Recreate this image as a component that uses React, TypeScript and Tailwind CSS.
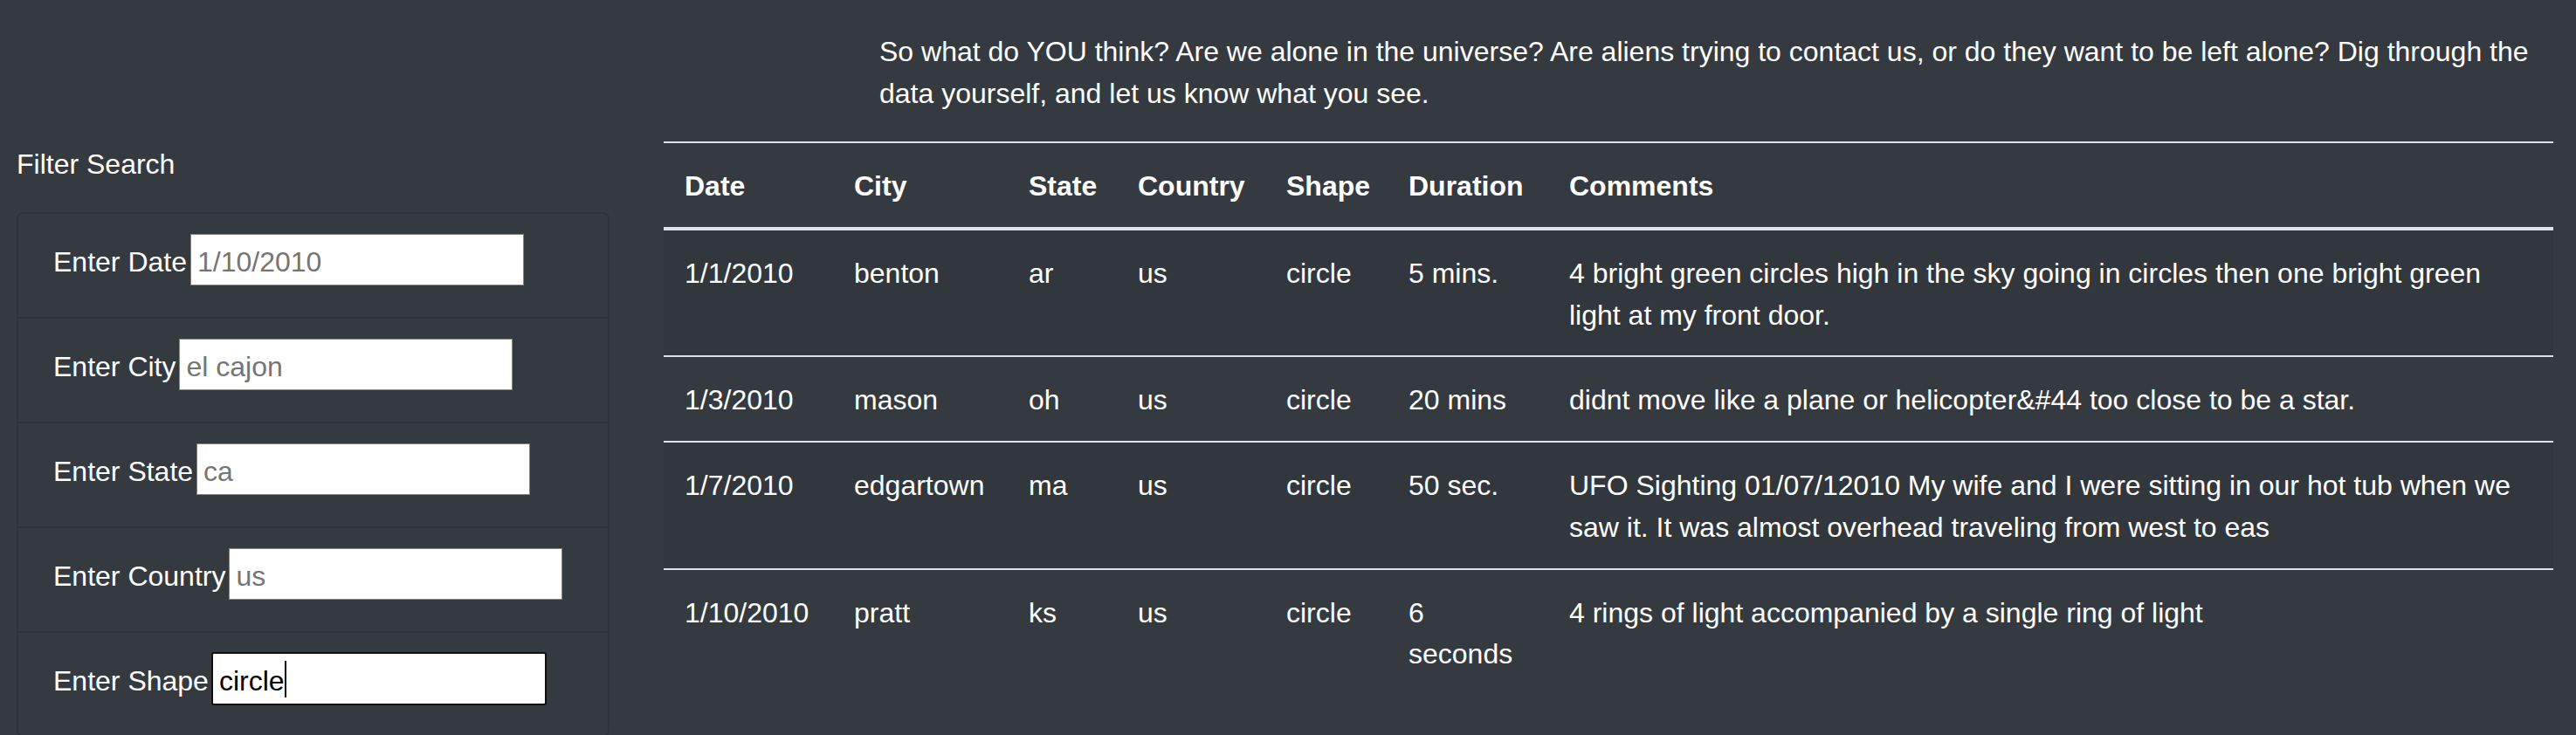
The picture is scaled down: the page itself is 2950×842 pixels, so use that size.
import React from "react"

type Sighting = {
  date: string
  city: string
  state: string
  country: string
  shape: string
  duration: string
  comments: string
}

const SIGHTINGS: Sighting[] = [
  {
    date: "1/1/2010",
    city: "benton",
    state: "ar",
    country: "us",
    shape: "circle",
    duration: "5 mins.",
    comments: "4 bright green circles high in the sky going in circles then one bright green light at my front door.",
  },
  {
    date: "1/3/2010",
    city: "mason",
    state: "oh",
    country: "us",
    shape: "circle",
    duration: "20 mins",
    comments: "didnt move like a plane or helicopter&#44 too close to be a star.",
  },
  {
    date: "1/7/2010",
    city: "edgartown",
    state: "ma",
    country: "us",
    shape: "circle",
    duration: "50 sec.",
    comments:
      "UFO Sighting 01/07/12010 My wife and I were sitting in our hot tub when we saw it. It was almost overhead traveling from west to eas",
  },
  {
    date: "1/10/2010",
    city: "pratt",
    state: "ks",
    country: "us",
    shape: "circle",
    duration: "6 seconds",
    comments: "4 rings of light accompanied by a single ring of light",
  },
]

const COLUMNS = [
  { label: "Date", width: "w-[194px]" },
  { label: "City", width: "w-[200px]" },
  { label: "State", width: "w-[125px]" },
  { label: "Country", width: "w-[170px]" },
  { label: "Shape", width: "w-[140px]" },
  { label: "Duration", width: "w-[184px]" },
  { label: "Comments", width: "" },
]

const FILTERS = [
  { id: "datetime", label: "Enter Date", placeholder: "1/10/2010" },
  { id: "city", label: "Enter City", placeholder: "el cajon" },
  { id: "state", label: "Enter State", placeholder: "ca" },
  { id: "country", label: "Enter Country", placeholder: "us" },
]

function FilterItem({ id, label, placeholder }: { id: string; label: string; placeholder: string }) {
  return (
    <li className="flex items-start gap-[4px] px-[40px] pt-[23px] pb-[36px]">
      <label htmlFor={id} className="mt-[8px] leading-[48px]">
        {label}
      </label>
      <input
        id={id}
        type="text"
        placeholder={placeholder}
        className="h-[59px] w-[382px] border border-[#858585] bg-white px-[7px] pt-[6px] text-black placeholder:text-[#757575] focus:outline-none"
      />
    </li>
  )
}

export default function App() {
  return (
    <div className="min-h-screen bg-[#343a40] font-['Liberation_Sans',Arial,sans-serif] text-[32px] text-white">
      <div className="flex pl-[19px] pr-[26px]">
        {/* Filters */}
        <aside className="w-[679px] shrink-0 pt-[164px]">
          <p className="leading-[48px]">Filter Search</p>
          <ul className="mt-[31px] divide-y-2 divide-[#2e3338] rounded-[8px] border-2 border-[#2e3338]">
            {FILTERS.map((f) => (
              <FilterItem key={f.id} {...f} />
            ))}
            <li className="flex items-start gap-[3px] px-[40px] pt-[23px] pb-[36px]">
              <label htmlFor="shape" className="mt-[8px] leading-[48px]">
                Enter Shape
              </label>
              <div className="relative -my-px">
                <input
                  id="shape"
                  type="text"
                  defaultValue="circle"
                  className="h-[61px] w-[384px] rounded-[3px] border-2 border-[#101010] bg-white px-[7px] pt-[6px] text-black focus:outline-none"
                />
                <span className="absolute left-[84px] top-[10px] h-[42px] w-[2px] bg-black" />
              </div>
            </li>
          </ul>
        </aside>

        {/* Table */}
        <main className="ml-[62px] flex-1">
          <p className="pt-[36px] pl-[247px] leading-[47.5px]">
            So what do YOU think? Are we alone in the universe? Are aliens trying to contact us, or do they want to be
            left alone? Dig through the data yourself, and let us know what you see.
          </p>
          <table className="mt-[31px] w-full table-fixed border-collapse">
            <thead>
              <tr>
                {COLUMNS.map((c) => (
                  <th
                    key={c.label}
                    className={`${c.width} border-t-2 border-b-4 border-[#dee2e6] px-6 pt-[26px] pb-[22px] text-left align-bottom font-bold leading-[47.75px]`}
                  >
                    {c.label}
                  </th>
                ))}
              </tr>
            </thead>
            <tbody>
              {SIGHTINGS.map((s, i) => (
                <tr key={s.date} className={i % 2 === 0 ? "bg-[#31373d]" : ""}>
                  {[s.date, s.city, s.state, s.country, s.shape, s.duration, s.comments].map((v, j) => (
                    <td
                      key={j}
                      className="border-t-2 border-[#dee2e6] px-6 pt-[26px] pb-[22px] align-top leading-[47.75px]"
                    >
                      {v}
                    </td>
                  ))}
                </tr>
              ))}
            </tbody>
          </table>
        </main>
      </div>
    </div>
  )
}
